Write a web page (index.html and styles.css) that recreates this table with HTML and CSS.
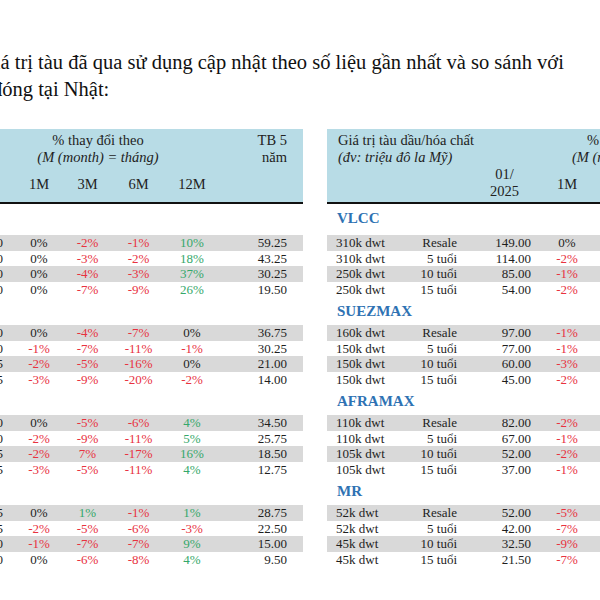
FILE: index.html
```html
<!DOCTYPE html>
<html lang="vi">
<head>
<meta charset="utf-8">
<link rel="stylesheet" href="styles.css">
</head>
<body>
<div class="doc">
  <p class="intro">
    <span class="l1">Giá trị tàu đã qua sử dụng cập nhật theo số liệu gần nhất và so sánh với</span>
    <span class="l2">đóng tại Nhật:</span>
  </p>

  <div class="tables">
    <!-- LEFT TABLE -->
    <div class="tbl tleft">
      <div class="head grid-l">
        <div class="hl-title">% thay đổi theo<br><i>(M (month) = tháng)</i></div>
        <div class="hl-tb">TB 5<br>năm</div>
        <div class="hc c2">1M</div>
        <div class="hc c3">3M</div>
        <div class="hc c4">6M</div>
        <div class="hc c5">12M</div>
      </div>

      <div class="sec first"><div class="lab">&nbsp;</div></div>
      <div class="row grid-l alt"><span class="r">0</span><span>0%</span><span class="neg">-2%</span><span class="neg">-1%</span><span class="pos">10%</span><span class="r">59.25</span></div>
      <div class="row grid-l"><span class="r">0</span><span>0%</span><span class="neg">-3%</span><span class="neg">-2%</span><span class="pos">18%</span><span class="r">43.25</span></div>
      <div class="row grid-l alt"><span class="r">0</span><span>0%</span><span class="neg">-4%</span><span class="neg">-3%</span><span class="pos">37%</span><span class="r">30.25</span></div>
      <div class="row grid-l"><span class="r">0</span><span>0%</span><span class="neg">-7%</span><span class="neg">-9%</span><span class="pos">26%</span><span class="r">19.50</span></div>

      <div class="sec"><div class="lab">&nbsp;</div></div>
      <div class="row grid-l alt"><span class="r">0</span><span>0%</span><span class="neg">-4%</span><span class="neg">-7%</span><span>0%</span><span class="r">36.75</span></div>
      <div class="row grid-l"><span class="r">0</span><span class="neg">-1%</span><span class="neg">-7%</span><span class="neg">-11%</span><span class="neg">-1%</span><span class="r">30.25</span></div>
      <div class="row grid-l alt"><span class="r">5</span><span class="neg">-2%</span><span class="neg">-5%</span><span class="neg">-16%</span><span>0%</span><span class="r">21.00</span></div>
      <div class="row grid-l"><span class="r">5</span><span class="neg">-3%</span><span class="neg">-9%</span><span class="neg">-20%</span><span class="neg">-2%</span><span class="r">14.00</span></div>

      <div class="sec"><div class="lab">&nbsp;</div></div>
      <div class="row grid-l alt"><span class="r">0</span><span>0%</span><span class="neg">-5%</span><span class="neg">-6%</span><span class="pos">4%</span><span class="r">34.50</span></div>
      <div class="row grid-l"><span class="r">0</span><span class="neg">-2%</span><span class="neg">-9%</span><span class="neg">-11%</span><span class="pos">5%</span><span class="r">25.75</span></div>
      <div class="row grid-l alt"><span class="r">5</span><span class="neg">-2%</span><span class="neg">7%</span><span class="neg">-17%</span><span class="pos">16%</span><span class="r">18.50</span></div>
      <div class="row grid-l"><span class="r">5</span><span class="neg">-3%</span><span class="neg">-5%</span><span class="neg">-11%</span><span class="pos">4%</span><span class="r">12.75</span></div>

      <div class="sec"><div class="lab">&nbsp;</div></div>
      <div class="row grid-l alt"><span class="r">5</span><span>0%</span><span class="pos">1%</span><span class="neg">-1%</span><span class="pos">1%</span><span class="r">28.75</span></div>
      <div class="row grid-l"><span class="r">5</span><span class="neg">-2%</span><span class="neg">-5%</span><span class="neg">-6%</span><span class="neg">-3%</span><span class="r">22.50</span></div>
      <div class="row grid-l alt"><span class="r">0</span><span class="neg">-1%</span><span class="neg">-7%</span><span class="neg">-7%</span><span class="pos">9%</span><span class="r">15.00</span></div>
      <div class="row grid-l"><span class="r">0</span><span>0%</span><span class="neg">-6%</span><span class="neg">-8%</span><span class="pos">4%</span><span class="r">9.50</span></div>
    </div>

    <!-- RIGHT TABLE -->
    <div class="tbl tright">
      <div class="head grid-r">
        <div class="hr-title">Giá trị tàu dầu/hóa chất<br><i>(đv: triệu đô la Mỹ)</i></div>
        <div class="hr-pct"><span class="p1">% thay đổi theo</span><br><i class="p2">(M (month) = tháng)</i></div>
        <div class="hr-date"><span>01/<br>2025</span></div>
        <div class="hc rc4">1M</div>
        <div class="hc rc5">3M</div>
      </div>

      <div class="sec first"><div class="lab">VLCC</div></div>
      <div class="row grid-r alt"><span class="lft">310k dwt</span><span class="r">Resale</span><span class="r">149.00</span><span>0%</span><span class="neg">-2%</span></div>
      <div class="row grid-r"><span class="lft">310k dwt</span><span class="r">5 tuổi</span><span class="r">114.00</span><span class="neg">-2%</span><span class="neg">-3%</span></div>
      <div class="row grid-r alt"><span class="lft">250k dwt</span><span class="r">10 tuổi</span><span class="r">85.00</span><span class="neg">-1%</span><span class="neg">-4%</span></div>
      <div class="row grid-r"><span class="lft">250k dwt</span><span class="r">15 tuổi</span><span class="r">54.00</span><span class="neg">-2%</span><span class="neg">-7%</span></div>

      <div class="sec"><div class="lab">SUEZMAX</div></div>
      <div class="row grid-r alt"><span class="lft">160k dwt</span><span class="r">Resale</span><span class="r">97.00</span><span class="neg">-1%</span><span class="neg">-4%</span></div>
      <div class="row grid-r"><span class="lft">150k dwt</span><span class="r">5 tuổi</span><span class="r">77.00</span><span class="neg">-1%</span><span class="neg">-5%</span></div>
      <div class="row grid-r alt"><span class="lft">150k dwt</span><span class="r">10 tuổi</span><span class="r">60.00</span><span class="neg">-3%</span><span class="neg">-7%</span></div>
      <div class="row grid-r"><span class="lft">150k dwt</span><span class="r">15 tuổi</span><span class="r">45.00</span><span class="neg">-2%</span><span class="neg">-8%</span></div>

      <div class="sec"><div class="lab">AFRAMAX</div></div>
      <div class="row grid-r alt"><span class="lft">110k dwt</span><span class="r">Resale</span><span class="r">82.00</span><span class="neg">-2%</span><span class="neg">-5%</span></div>
      <div class="row grid-r"><span class="lft">110k dwt</span><span class="r">5 tuổi</span><span class="r">67.00</span><span class="neg">-1%</span><span class="neg">-6%</span></div>
      <div class="row grid-r alt"><span class="lft">105k dwt</span><span class="r">10 tuổi</span><span class="r">52.00</span><span class="neg">-2%</span><span class="neg">-7%</span></div>
      <div class="row grid-r"><span class="lft">105k dwt</span><span class="r">15 tuổi</span><span class="r">37.00</span><span class="neg">-1%</span><span class="neg">-9%</span></div>

      <div class="sec"><div class="lab">MR</div></div>
      <div class="row grid-r alt"><span class="lft">52k dwt</span><span class="r">Resale</span><span class="r">52.00</span><span class="neg">-5%</span><span class="neg">-8%</span></div>
      <div class="row grid-r"><span class="lft">52k dwt</span><span class="r">5 tuổi</span><span class="r">42.00</span><span class="neg">-7%</span><span class="neg">-9%</span></div>
      <div class="row grid-r alt"><span class="lft">45k dwt</span><span class="r">10 tuổi</span><span class="r">32.50</span><span class="neg">-9%</span><span class="neg">-10%</span></div>
      <div class="row grid-r"><span class="lft">45k dwt</span><span class="r">15 tuổi</span><span class="r">21.50</span><span class="neg">-7%</span><span class="neg">-9%</span></div>
    </div>
  </div>
</div>
</body>
</html>
```

FILE: styles.css
```css
html, body {
  margin: 0;
  padding: 0;
  background: #ffffff;
}
body {
  width: 600px;
  height: 600px;
  overflow: hidden;
  font-family: "Liberation Serif", "Times New Roman", serif;
  color: #1e1e1e;
}
.doc {
  width: 600px;
}
.intro {
  margin: 49px 0 0 0;
  font-size: 20.5px;
  line-height: 27px;
  white-space: nowrap;
  color: #111;
}
.intro .l1 {
  display: block;
  margin-left: -20px;
}
.intro .l2 {
  display: block;
  margin-left: -8px;
}

.tables {
  display: flex;
  margin-top: 26px;
  gap: 24px;
}
.tbl {
  flex: none;
}
.tleft {
  width: 333px;
  margin-left: -30px;
}
.tright {
  width: 360px;
}

.grid-l {
  display: grid;
  grid-template-columns: 45px 48px 49px 53px 54px 68px 16px;
}
.grid-r {
  display: grid;
  grid-template-columns: 73px 57px 74px 72px 84px;
}

.head {
  background: #b8dce6;
  border-bottom: 2px solid #111;
  padding-top: 3px;
  height: 70px;
  box-sizing: content-box;
  grid-template-rows: 17px 17px 36px;
  font-size: 14.5px;
  line-height: 17px;
  color: #222;
}
.head i {
  font-style: italic;
}
.hl-title {
  grid-column: 2 / 6;
  grid-row: 1 / 3;
  text-align: center;
  padding-right: 38px;
}
.hl-tb {
  grid-column: 6;
  grid-row: 1 / 3;
  text-align: right;
}
.hc {
  grid-row: 3;
  align-self: center;
  text-align: center;
}
.c2 { grid-column: 2; }
.c3 { grid-column: 3; }
.c4 { grid-column: 4; }
.c5 { grid-column: 5; }

.hr-title {
  grid-column: 1 / 4;
  grid-row: 1 / 3;
  padding-left: 11px;
  white-space: nowrap;
}
.hr-pct {
  grid-column: 4 / 6;
  grid-row: 1 / 3;
  white-space: nowrap;
}
.hr-pct .p1 {
  padding-left: 56px;
}
.hr-pct .p2 {
  padding-left: 41px;
}
.hr-date {
  grid-column: 3;
  grid-row: 3;
  text-align: right;
  padding-right: 12px;
}
.hr-date span {
  display: inline-block;
  text-align: center;
}
.rc4 { grid-column: 4; }
.rc5 { grid-column: 5; }

.sec {
  height: 28px;
}
.sec.first {
  height: 31px;
}
.lab {
  padding-top: 6px;
  padding-left: 10px;
  font-size: 15px;
  line-height: 17px;
  font-weight: bold;
  color: #2e72b3;
}

.row {
  height: 15.5px;
  font-size: 13px;
  line-height: 15.5px;
  white-space: nowrap;
}
.row span {
  text-align: center;
}
.row span.r {
  text-align: right;
}
.grid-l span:first-child {
  padding-right: 12px;
}
.row span.lft {
  text-align: left;
  padding-left: 9px;
}
.row.alt {
  background: #d9d9d9;
}
.neg {
  color: #e8323f;
}
.pos {
  color: #35a86a;
}
```
